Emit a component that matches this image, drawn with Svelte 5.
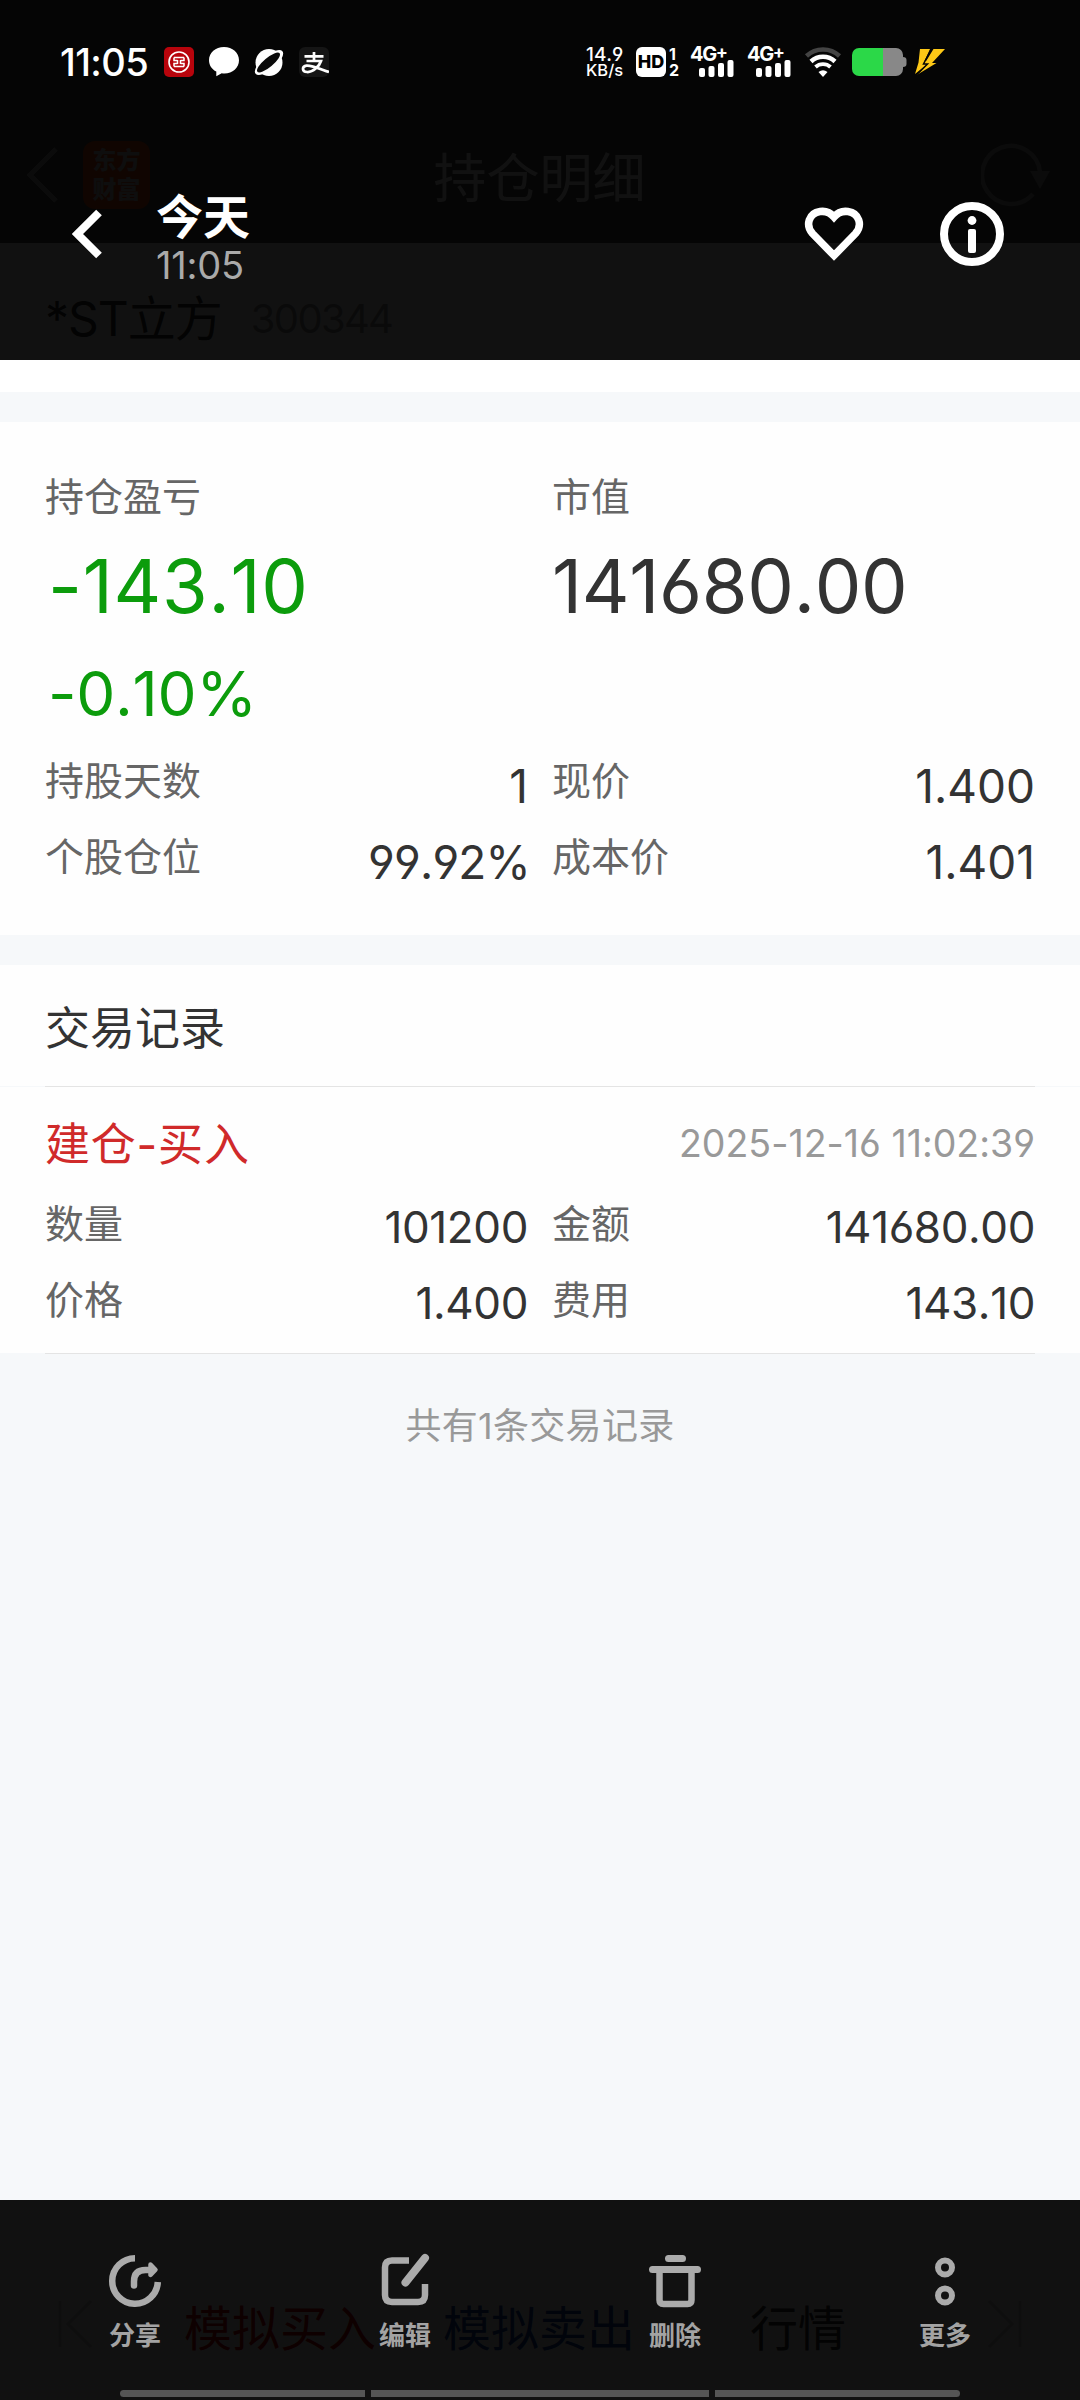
<script lang="ts">
	type Field = { label: string; value: string };

	const holding: Field[] = [
		{ label: '持股天数', value: '1' },
		{ label: '现价', value: '1.400' },
		{ label: '个股仓位', value: '99.92%' },
		{ label: '成本价', value: '1.401' }
	];

	const trade: Field[] = [
		{ label: '数量', value: '101200' },
		{ label: '金额', value: '141680.00' },
		{ label: '价格', value: '1.400' },
		{ label: '费用', value: '143.10' }
	];

	const actions = [
		{ id: 'share', label: '分享' },
		{ id: 'edit', label: '编辑' },
		{ id: 'delete', label: '删除' },
		{ id: 'more', label: '更多' }
	];
</script>

<div class="screen">
	<!-- screenshot being previewed -->
	<div class="app">
		<header class="app-header">
			<svg class="app-back" width="34" height="58" viewBox="0 0 34 58">
				<path d="M31 3 5 29l26 26" fill="none" stroke="#a8a8a8" stroke-width="5" />
			</svg>
			<div class="app-logo"><span>东方</span><span>财富</span></div>
			<h1>持仓明细</h1>
			<svg class="app-refresh" width="74" height="68" viewBox="0 0 74 68">
				<path d="M59 31A29 29 0 1 0 52 53" fill="none" stroke="#a0a0a0" stroke-width="4.5" />
				<path d="M49 30h20l-10 18z" fill="#a0a0a0" />
			</svg>
		</header>

		<div class="stock">
			<span class="stock-name">*ST立方</span>
			<span class="stock-code">300344</span>
		</div>

		<section class="card summary">
			<div class="columns">
				<div>
					<div class="label">持仓盈亏</div>
					<div class="big loss">-143.10</div>
					<div class="percent">-0.10%</div>
				</div>
				<div>
					<div class="label">市值</div>
					<div class="big">141680.00</div>
				</div>
			</div>
			<div class="fields">
				{#each holding as field}
					<div class="field">
						<span class="label">{field.label}</span>
						<span class="value" class:ratio={field.value.endsWith('%')}>{field.value}</span>
					</div>
				{/each}
			</div>
		</section>

		<section class="trades">
			<h2>交易记录</h2>
			<hr />
			<div class="record">
				<div class="record-head">
					<span class="side">建仓-买入</span>
					<span class="time">2025-12-16 11:02:39</span>
				</div>
				<div class="fields small">
					{#each trade as field}
						<div class="field">
							<span class="label">{field.label}</span>
							<span class="value">{field.value}</span>
						</div>
					{/each}
				</div>
			</div>
			<hr />
			<p class="total">共有1条交易记录</p>
		</section>

		<footer class="app-footer">
			<svg width="36" height="48" viewBox="0 0 36 48" fill="none" stroke="#ccc" stroke-width="3">
				<path d="M3 1v46M34 1 11 24l23 23" />
			</svg>
			<span class="buy">模拟买入</span>
			<span class="sell">模拟卖出</span>
			<span class="quote">行情</span>
			<svg class="last" width="36" height="48" viewBox="0 0 36 48" fill="none" stroke="#ccc" stroke-width="3">
				<path d="M33 1v46M2 1l23 23L2 47" />
			</svg>
		</footer>
	</div>

	<!-- gallery chrome -->
	<div class="overlay top">
		<div class="status">
			<span class="clock">11:05</span>
			<svg class="app-icon" width="30" height="30" viewBox="0 0 30 30">
				<rect width="30" height="30" rx="5" fill="#b8040c" />
				<circle cx="15" cy="15" r="10" fill="none" stroke="#fff" stroke-width="1.6" />
				<path
					d="M10 10.500h10M10 19.500h10M10 10.500v3h3.500M20 10.500v3h-3.500M10 19.500v-3h3.500M20 19.500v-3h-3.500M13.500 13v4M16.500 13v4"
					fill="none"
					stroke="#fff"
					stroke-width="1.5"
				/>
			</svg>
			<svg class="app-icon" width="30" height="30" viewBox="0 0 30 30">
				<path d="M15 0c8.500 0 15 5.600 15 13.200S23.500 26.500 15.500 26.500c-1 0-2-.1-2.800-.3L7.300 29.200v-4.600C2.800 22.300 0 18.300 0 13.200 0 5.600 6.500 0 15 0z" fill="#fff" />
			</svg>
			<svg class="app-icon" width="30" height="30" viewBox="0 0 30 30">
				<circle cx="15" cy="15.500" r="13.500" fill="#fff" />
				<ellipse cx="15" cy="15.500" rx="17.500" ry="7" transform="rotate(-40 15 15.500)" fill="#fff" />
				<ellipse cx="14.500" cy="15.500" rx="14.500" ry="4.600" transform="rotate(-40 14.500 15.500)" fill="#0a0a0a" />
			</svg>
			<svg class="app-icon" width="30" height="30" viewBox="0 0 30 30">
				<rect width="30" height="30" rx="6" fill="#151515" />
				<path
					d="M5.500 9.300h19M15 5v9M7.500 14h14.500C20.500 19 14 25.500 8 25c-5-.3-5.500-5.500-.5-6.300 5-.6 14 3.500 22.500 6.300"
					fill="none"
					stroke="#fff"
					stroke-width="2.700"
				/>
			</svg>

			<div class="status-right">
				<div class="speed"><span>14.9</span><span>KB/s</span></div>
				<div class="hd">HD</div>
				<div class="sims"><span>1</span><span>2</span></div>
				{#each [1, 2] as sim (sim)}
					<div class="signal">
						<span>4G<sup>+</sup></span>
						<svg width="36" height="17" viewBox="0 0 36 17" fill="#fff">
							<rect x="0" y="8" width="6" height="9" rx="2" />
							<rect x="9.500" y="6" width="6" height="11" rx="2" />
							<rect x="19" y="3" width="6" height="14" rx="2" />
							<rect x="28.500" y="0" width="6" height="17" rx="2" />
						</svg>
					</div>
				{/each}
				<svg class="wifi" width="38" height="30" viewBox="0 0 38 30" fill="none" stroke-width="4.500">
					<path d="M2.500 9a24 24 0 0 1 33 0" stroke="#444" />
					<path d="M7 14.500a17.500 17.500 0 0 1 24 0" stroke="#fff" />
					<path d="M11.500 20a11 11 0 0 1 15 0" stroke="#fff" stroke-width="3.800" />
					<path d="M19 30l-4.500-5q4.500-3.500 9 0z" fill="#fff" />
				</svg>
				<svg class="battery" width="55" height="28" viewBox="0 0 55 28">
					<path d="M31 0h13a7 7 0 0 1 7 7v2q3.500 0 3.500 3v4q0 3-3.500 3v2a7 7 0 0 1-7 7H31z" fill="#888" />
					<path d="M31 0v28H7a7 7 0 0 1-7-7V7a7 7 0 0 1 7-7z" fill="#2bd848" />
				</svg>
				<svg class="bolt" width="30" height="26" viewBox="0 0 30 26" fill="#fdc816">
					<path d="M5 0h10L9.500 12 14 11.500 10.500 16.500 0 25 3.500 13.500z" />
					<path d="M18.500 0H30L17 14h4.500L2.500 25.500 11 16 9 15.500z" />
					<path d="M16.500 0 8.500 15h4L3 24.500" fill="none" stroke="#050505" stroke-width="1.500" />
				</svg>
			</div>
		</div>

		<div class="photo-bar">
			<svg class="back" width="32" height="50" viewBox="0 0 32 50">
				<path d="M27 3.500 5.500 25 27 46.500" fill="none" stroke="#fff" stroke-width="8" />
			</svg>
			<div class="taken">
				<strong>今天</strong>
				<span>11:05</span>
			</div>
			<svg class="heart" width="60" height="56" viewBox="0 0 60 56">
				<path
					d="M30 49.500 8.500 27.500C4.500 23 4 18 5.300 14 8.500 4.500 22.500 2 30 11 37.500 2 51.500 4.500 54.700 14c1.300 4 .8 9-3.200 13.500z"
					fill="none"
					stroke="#fff"
					stroke-width="7.500"
				/>
			</svg>
			<svg class="info" width="64" height="64" viewBox="0 0 64 64">
				<circle cx="32" cy="32" r="28" fill="none" stroke="#fff" stroke-width="8" />
				<circle cx="32" cy="18.500" r="4.400" fill="#fff" />
				<rect x="28" y="27" width="8" height="24" rx="2" fill="#fff" />
			</svg>
		</div>
	</div>

	<div class="overlay bottom">
		<nav>
			{#each actions as action (action.id)}
				<div class="action">
					<svg width="56" height="56" viewBox="0 0 56 56" fill="none" stroke="#ababab" stroke-width="6.500">
						{#if action.id === 'share'}
							<path d="M28 5.200A22.800 22.800 0 1 0 50.800 29" />
							<path d="M27 32.500v-4q0-11.500 11.500-11.500H43" stroke-linecap="round" />
							<path d="M43.500 11.500l5 5.200-5 5.200z" fill="#ababab" stroke-width="4.500" stroke-linejoin="round" />
						{:else if action.id === 'edit'}
							<path d="M32 7.500H15q-7 0-7 7V42q0 7 7 7h26q7 0 7-7V31" />
							<path d="M28.500 29.500 48 5" stroke-width="8" stroke-linecap="round" />
						{:else if action.id === 'delete'}
							<path d="M21.500 5.500h14M5.500 16.500h45" stroke-width="7" stroke-linecap="round" />
							<path d="M12.500 17v30q0 4 4 4h24q4 0 4-4V17" />
						{:else}
							<circle cx="28" cy="14.500" r="7" stroke-width="6" />
							<circle cx="28" cy="42.500" r="7" stroke-width="6" />
						{/if}
					</svg>
					<span>{action.label}</span>
				</div>
			{/each}
		</nav>
		<div class="gestures"><i></i><i></i><i></i></div>
	</div>
</div>

<style>
	:global(body) {
		background: #f6f8fa;
	}

	.screen {
		position: relative;
		width: 1080px;
		height: 2400px;
		overflow: hidden;
		background: #f6f8fa;
		color: #333;
		font-family: Inter, 'Noto Sans CJK SC', sans-serif;
		font-feature-settings: 'cv03', 'cv04', 'calt' 0;
		font-kerning: none;
	}

	.app {
		display: flex;
		flex-direction: column;
		height: 100%;
	}

	.app-header {
		display: flex;
		align-items: center;
		box-sizing: border-box;
		height: 243px;
		padding: 107px 25px 0;
		background: #484848;
		color: #fff;
	}

	.app-logo {
		display: flex;
		flex-direction: column;
		justify-content: center;
		width: 67px;
		height: 68px;
		margin-left: 24px;
		border-radius: 12px;
		background: #e84a10;
		color: #ccc;
		font-size: 24px;
		font-weight: 900;
		line-height: 29px;
		text-align: center;
	}

	h1 {
		flex: 1;
		margin: 0;
		padding: 8px 52px 0 0;
		font-size: 53px;
		font-weight: 400;
		line-height: 60px;
		text-align: center;
	}

	.stock {
		display: flex;
		align-items: center;
		gap: 29px;
		box-sizing: border-box;
		height: 149px;
		padding: 3px 45px 0;
		background: #fff;
	}

	.stock-name {
		font-size: 48px;
		letter-spacing: -1px;
		line-height: 60px;
	}

	.stock-code {
		color: #999;
		font-size: 40px;
		letter-spacing: -1.7px;
		line-height: 60px;
	}

	.card {
		margin-top: 30px;
		padding: 50px 45px 40px;
		background: #fefefe;
	}

	.columns,
	.fields {
		display: grid;
		grid-template-columns: 1fr 1fr;
		column-gap: 24px;
	}

	.fields {
		grid-auto-rows: 76px;
	}

	.summary .fields {
		margin-top: 14px;
	}

	.label {
		color: #666;
		font-size: 39px;
		line-height: 50px;
	}

	.big {
		margin-top: 19px;
		font-size: 74px;
		letter-spacing: -0.3px;
		line-height: 90px;
	}

	.loss,
	.percent {
		padding-left: 3px;
		color: #0c9c0c;
	}

	.loss {
		letter-spacing: 0.7px;
	}

	.percent {
		margin-top: 28px;
		font-size: 62px;
		letter-spacing: -0.3px;
		line-height: 70px;
	}

	.field {
		display: flex;
		align-items: center;
		justify-content: space-between;
	}

	.value {
		padding-top: 10px;
		font-size: 46px;
		line-height: 60px;
	}

	.ratio {
		margin-right: -2px;
		letter-spacing: -0.8px;
	}

	.small .value {
		padding-top: 8px;
		font-size: 44px;
		letter-spacing: -0.4px;
	}

	.small .label {
		padding-top: 2px;
	}

	.trades {
		margin-top: 30px;
	}

	h2 {
		margin: 0;
		padding: 7px 45px 0;
		background: #fefefe;
		font-size: 45px;
		font-weight: 400;
		line-height: 114px;
	}

	hr {
		height: 1px;
		margin: 0 45px;
		border: 0;
		background: #e4e4e4;
	}

	.record {
		padding: 16px 45px;
		background: #fefefe;
	}

	.record-head {
		display: flex;
		justify-content: space-between;
		margin-bottom: 2px;
		line-height: 80px;
	}

	.side {
		height: 80px;
		color: #d02a2a;
		font-size: 45px;
		letter-spacing: 0.8px;
		line-height: 83px;
	}

	.time {
		height: 80px;
		color: #999;
		font-size: 37.5px;
		line-height: 81px;
	}

	.total {
		margin: 47px 0 0;
		color: #999;
		font-size: 36px;
		letter-spacing: 0.3px;
		line-height: 51px;
		text-align: center;
	}

	.app-footer {
		display: flex;
		align-items: flex-start;
		box-sizing: border-box;
		height: 121px;
		margin-top: auto;
		padding: 21px 57px 0;
		background: #fff;
		font-size: 48px;
		line-height: 58px;
	}

	.buy {
		margin-left: 91px;
		color: #d00000;
	}

	.sell {
		margin-left: 67px;
		color: #1040a0;
	}

	.quote {
		margin-left: 115px;
	}

	.last {
		margin-left: auto;
	}

	/* gallery chrome */
	.overlay {
		position: absolute;
		left: 0;
		right: 0;
		background: rgba(0, 0, 0, 0.933);
		color: #fff;
	}

	.top {
		top: 0;
		height: 360px;
	}

	.bottom {
		bottom: 0;
		height: 200px;
	}

	.status {
		display: flex;
		align-items: center;
		gap: 15px;
		box-sizing: border-box;
		height: 124px;
		padding-left: 60px;
	}

	.clock {
		width: 89px;
		font-size: 38px;
		font-weight: 500;
		letter-spacing: -0.6px;
		line-height: 40px;
	}

	.status-right {
		display: flex;
		align-items: center;
		height: 30px;
		margin-left: 242px;
	}

	.speed {
		display: flex;
		flex-direction: column;
		width: 50px;
		font-size: 16.5px;
		font-weight: 500;
		line-height: 15px;
	}

	.speed span:first-child {
		font-size: 19px;
		line-height: 17px;
	}

	.hd {
		width: 30px;
		border-radius: 6px;
		background: #fff;
		color: #000;
		font-size: 18px;
		font-weight: 800;
		line-height: 30px;
		text-align: center;
	}

	.sims {
		display: flex;
		flex-direction: column;
		gap: 1px;
		width: 24px;
		padding-left: 3px;
		box-sizing: border-box;
		font-size: 16px;
		font-weight: 700;
		line-height: 15px;
	}

	.signal {
		display: flex;
		flex-direction: column;
		align-items: flex-end;
		justify-content: space-between;
		width: 45px;
		height: 30px;
		margin-right: 12px;
	}

	.signal span {
		align-self: flex-start;
		height: 13px;
		font-size: 20px;
		font-weight: 700;
		letter-spacing: -1.4px;
		line-height: 15px;
		white-space: nowrap;
	}

	.signal sup {
		font-size: 18px;
		line-height: 0;
		vertical-align: 3px;
	}

	.battery {
		margin-left: 10px;
	}

	.bolt {
		margin-left: 8px;
	}

	.photo-bar {
		display: flex;
		align-items: center;
		height: 94px;
		margin-top: 63px;
		padding: 0 76px 0 72px;
	}

	.taken {
		display: flex;
		flex: 1;
		flex-direction: column;
		margin-left: 52px;
		padding-top: 11px;
	}

	.taken strong {
		font-size: 47px;
		font-weight: 700;
		line-height: 50px;
	}

	.taken span {
		color: #aaa;
		font-size: 38px;
		letter-spacing: -0.2px;
		line-height: 46px;
	}

	.info {
		margin-left: 76px;
	}

	nav {
		display: grid;
		grid-template-columns: repeat(4, 1fr);
		padding-top: 53px;
	}

	.action {
		display: flex;
		flex-direction: column;
		align-items: center;
		color: #a3a3a3;
		font-size: 26px;
		font-weight: 700;
		line-height: 54px;
	}

	.gestures {
		display: grid;
		grid-template-columns: 245px 338px 245px;
		gap: 6px;
		margin: 27px 120px 0;
	}

	.gestures i {
		height: 7px;
		background: #555;
	}

	.gestures i:first-child {
		border-radius: 4px 0 0 4px;
	}

	.gestures i:last-child {
		border-radius: 0 4px 4px 0;
	}
</style>
